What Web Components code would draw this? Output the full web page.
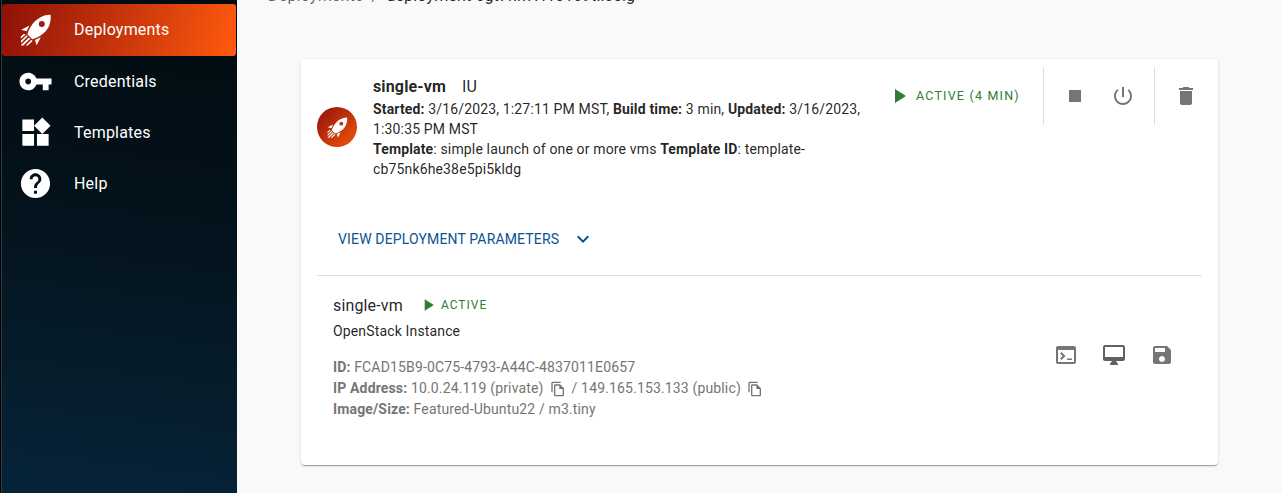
<!DOCTYPE html>
<html lang="en">
<head>
<meta charset="utf-8">
<title>Deployments</title>
<style>
html,body{margin:0;height:100%;overflow:hidden}
body{font-family:Roboto,"Liberation Sans",sans-serif;color:rgba(0,0,0,.87);background:#f9f9f9}
</style>
</head>
<body>
<app-shell></app-shell>
<script>
const ICONS={
 rocket:'<path fill-rule="evenodd" d="M30.5.7C24.5.4 18 3.8 13.7 8.6 10.8 12 8.6 16 7.3 20.3l5 5C17.3 23.8 22 21 25.5 17.4 29.4 13.2 31.5 6.8 30.5.7zM21.8 7.1a3 3 0 1 1 0 6 3 3 0 0 1 0-6z"/><path d="M9.4 11.5 1.3 15.7l5.3 1.6zM20.8 23.2l-4.2 8-1.6-5.3zM6.7 21.2l1.1 1.1L1 29v-2.2zM8.9 23.4l1.4 1.4L3.3 31.6H1v-.5zM11.4 25.7l1.2 1.2-4.8 4.7H5.7zM5.5 20.7.8 24.8v-2.2l3.2-2.9z"/>',
 key:'<path d="M12.65 10C11.83 7.67 9.61 6 7 6c-3.31 0-6 2.69-6 6s2.69 6 6 6c2.61 0 4.83-1.67 5.65-4H17v4h4v-4h2v-4H12.65zM7 14c-1.1 0-2-.9-2-2s.9-2 2-2 2 .9 2 2-.9 2-2 2z"/>',
 widgets:'<path d="M13 13v8h8v-8h-8zM3 21h8v-8H3v8zM3 3v8h8V3H3zm13.66-1.31L11 7.34 16.66 13l5.66-5.66-5.66-5.65z"/>',
 help:'<path d="M12 2C6.48 2 2 6.48 2 12s4.48 10 10 10 10-4.48 10-10S17.52 2 12 2zm1 17h-2v-2h2v2zm2.07-7.75l-.9.92C13.45 12.9 13 13.5 13 15h-2v-.5c0-1.1.45-2.1 1.17-2.83l1.24-1.26c.37-.36.59-.86.59-1.41 0-1.1-.9-2-2-2s-2 .9-2 2H8c0-2.21 1.79-4 4-4s4 1.79 4 4c0 .88-.36 1.68-.93 2.25z"/>',
 play:'<path d="M8 5v14l11-7z"/>',
 stop:'<path d="M6 6h12v12H6z"/>',
 power:'<path d="M13 3h-2v10h2V3zm4.83 2.17l-1.42 1.42C17.99 7.86 19 9.81 19 12c0 3.87-3.13 7-7 7s-7-3.13-7-7c0-2.19 1.01-4.14 2.58-5.42L6.17 5.17C4.23 6.82 3 9.26 3 12c0 4.97 4.03 9 9 9s9-4.03 9-9c0-2.74-1.23-5.18-3.17-6.83z"/>',
 trash:'<path d="M6 19c0 1.1.9 2 2 2h8c1.1 0 2-.9 2-2V7H6v12zM19 4h-3.5l-1-1h-5l-1 1H5v2h14V4z"/>',
 chevron:'<path d="M7.41 8.59 12 13.17l4.59-4.58L18 10l-6 6-6-6z"/>',
 copy:'<path d="M16 1H4c-1.1 0-2 .9-2 2v14h2V3h12V1zm-1 4H8c-1.1 0-1.99.9-1.99 2L6 21c0 1.1.89 2 1.99 2H19c1.1 0 2-.9 2-2V11l-6-6zM8 21V7h6v5h5v9H8z"/>',
 terminal:'<path d="M20 3H4c-1.11 0-2 .9-2 2v14c0 1.1.89 2 2 2h16c1.1 0 2-.9 2-2V5c0-1.1-.89-2-2-2zm0 16H4V7h16v12zm-2-2h-5v-1.6h5v1.6zM7.5 17l-1.41-1.41L8.67 13l-2.59-2.59L7.5 9l4 4-4 4z"/>',
 desktop:'<path d="M21 2H3c-1.1 0-2 .9-2 2v12c0 1.1.9 2 2 2h7l-2 3v1h8v-1l-2-3h7c1.1 0 2-.9 2-2V4c0-1.1-.9-2-2-2zm0 12H3V4h18v10z"/>',
 save:'<path d="M17 3H5c-1.11 0-2 .9-2 2v14c0 1.1.89 2 2 2h14c1.1 0 2-.9 2-2V7l-4-4zm-5 16c-1.66 0-3-1.34-3-3s1.34-3 3-3 3 1.34 3 3-1.34 3-3 3zm3-10H5V5h10v4z"/>'
};
function define(name,html){
 const t=document.createElement('template');t.innerHTML=html;
 customElements.define(name,class extends HTMLElement{
  constructor(){super();this.attachShadow({mode:'open'}).append(t.content.cloneNode(true));}
 });
}
customElements.define('ui-icon',class extends HTMLElement{
 connectedCallback(){
  if(this.shadowRoot)return;
  const n=this.getAttribute('name'),s=this.getAttribute('size')||24,b=n==='rocket'?32:24;
  this.attachShadow({mode:'open'}).innerHTML=`<style>:host{display:inline-block;flex:none;width:${s}px;height:${s}px}svg{display:block;fill:currentColor}</style><svg width="${s}" height="${s}" viewBox="0 0 ${b} ${b}">${ICONS[n]}</svg>`;
 }
});
define('nav-item',`<style>
:host{display:flex;align-items:center;height:51px;padding-left:16px;color:#fff;font-size:16px;letter-spacing:.2px;line-height:24px;box-sizing:border-box}
:host([active]){height:52px;background:linear-gradient(105deg,#8e1008,#ff5a0e);border-radius:3px;margin-right:1px}
.i{width:36px;display:flex;justify-content:center;margin-right:20px}
:host(:not([active])) .i{margin-left:-1px;margin-right:21px}
</style><span class="i"><slot name="icon"></slot></span><slot></slot>`);
define('side-nav',`<style>
:host{display:block;box-sizing:border-box;width:237px;height:100%;border-left:2px solid #000;background:linear-gradient(187deg,#020c10 0%,#03111a 40%,#061e2e 80%,#06233a 100%)}
nav{box-sizing:border-box;box-shadow:-1px 0 #2d3b43;height:100%;padding-top:4px}
</style><nav>
<nav-item active><ui-icon slot="icon" name="rocket" size="32"></ui-icon>Deployments</nav-item>
<nav-item><ui-icon slot="icon" name="key" size="35"></ui-icon>Credentials</nav-item>
<nav-item><ui-icon slot="icon" name="widgets" size="35"></ui-icon>Templates</nav-item>
<nav-item><ui-icon slot="icon" name="help" size="35"></ui-icon>Help</nav-item></nav>`);
define('bread-crumbs',`<style>:host{display:flex;height:24px;margin-top:-16px;padding-left:31px;font-size:16px;line-height:24px;letter-spacing:.2px;color:rgba(0,0,0,.6)}
i{font-style:normal;margin:0 8px}b{font-weight:400;letter-spacing:.15px;color:rgba(0,0,0,.87)}</style><span>Deployments</span><i>/</i><b>deployment-cgt7hm17r01c9tils5ig</b>`);
define('status-label',`<style>:host{display:flex;align-items:center;color:#2e7d32;font-size:12px;letter-spacing:1px;line-height:20px;white-space:nowrap}</style><slot></slot>`);
define('deployment-header',`<style>
:host{display:flex;height:146px}
.avatar{flex:none;width:40px;height:40px;margin:40px 16px 0 0;border-radius:50%;background:linear-gradient(135deg,#8e1008,#f4560e);color:#fff;display:flex;align-items:center;justify-content:center}
.text{width:500px;margin-top:8px;font-size:14px;line-height:20px;letter-spacing:.15px}
h2{margin:0;font-size:16px;line-height:24px;font-weight:700;letter-spacing:.15px;display:flex;gap:16px}h2 span{font-weight:400}
b{font-weight:700}
status-label{width:153px;height:58px;margin-left:17px;font-size:12.5px;letter-spacing:1.2px}status-label ui-icon{margin-right:5px;margin-left:-3px}
.actions{display:flex;align-items:center;height:58px;color:#757575}
.actions div{box-sizing:border-box;display:flex;align-items:center;gap:24px;height:58px;border-left:1px solid #e0e0e0}
.a{width:111px;padding-left:19px}.b{padding-left:19px}
</style><div class="avatar"><ui-icon name="rocket" size="21"></ui-icon></div>
<div class="text"><h2>single-vm <span>IU</span></h2><div><b>Started:</b> 3/16/2023, 1:27:11 PM MST, <b>Build time:</b> 3 min, <b>Updated:</b> 3/16/2023,<br>1:30:35 PM MST<br><b>Template</b>: simple launch of one or more vms <b>Template ID</b>: template-<br>cb75nk6he38e5pi5kldg</div></div>
<status-label><ui-icon name="play" size="24"></ui-icon>ACTIVE (4 MIN)</status-label>
<div class="actions"><div class="a"><ui-icon name="stop"></ui-icon><ui-icon name="power"></ui-icon></div><div class="b"><ui-icon name="trash"></ui-icon></div></div>`);
define('instance-row',`<style>
:host{display:flex;justify-content:space-between;padding:17px 28px 0 16px}
.title{display:flex;align-items:center;height:24px;font-size:16px;letter-spacing:.15px}
status-label{margin-left:15.5px}status-label ui-icon{margin-right:2.5px}
.type{font-size:14px;line-height:20px;letter-spacing:.15px;margin-top:4px}
.info{margin-top:16px;font-size:14px;line-height:21px;letter-spacing:.15px;color:#757575}
.line{display:flex;height:21px;align-items:center;white-space:pre}
.line ui-icon{margin-left:6px}.sep{margin-left:6px}.line .sep+ui-icon{margin-left:6.5px}
.actions{display:flex;gap:24px;margin-top:50px;height:24px;color:#757575}.dark{color:#616161}
</style><div><div class="title">single-vm <status-label><ui-icon name="play" size="20"></ui-icon>ACTIVE</status-label></div>
<div class="type">OpenStack Instance</div>
<div class="info"><div class="line"><b>ID:</b> FCAD15B9-0C75-4793-A44C-4837011E0657</div>
<div class="line"><b>IP Address:</b> 10.0.24.119 (private)<ui-icon name="copy" size="16"></ui-icon><span class="sep">/ 149.165.153.133 (public)</span><ui-icon name="copy" size="16"></ui-icon></div>
<div class="line"><b>Image/Size:</b> Featured-Ubuntu22 / m3.tiny</div></div></div>
<div class="actions"><ui-icon name="terminal"></ui-icon><ui-icon class="dark" name="desktop"></ui-icon><ui-icon name="save"></ui-icon></div>`);
define('deployment-card',`<style>
:host{display:block;box-sizing:border-box;width:917px;height:406px;margin:51px 0 0 64px;padding:8px 16px;background:#fff;border-radius:4px;box-shadow:0 2px 1px -1px rgba(0,0,0,.2),0 1px 1px rgba(0,0,0,.14),0 1px 3px rgba(0,0,0,.12)}
.params{display:flex;align-items:center;height:52px;padding-left:21px;color:#0b5394;font-size:14px;letter-spacing:.15px}
.params ui-icon{margin-left:12px}
hr{margin:10px 0 0;border:0;height:1px;background:#e0e0e0}
</style><deployment-header></deployment-header><div class="params">VIEW DEPLOYMENT PARAMETERS<ui-icon name="chevron"></ui-icon></div><hr><instance-row></instance-row>`);
define('app-shell',`<style>:host{display:flex;height:493px;overflow:hidden}main{flex:1;background:#f9f9f9}</style><side-nav></side-nav><main><bread-crumbs></bread-crumbs><deployment-card></deployment-card></main>`);
</script>
</body>
</html>
